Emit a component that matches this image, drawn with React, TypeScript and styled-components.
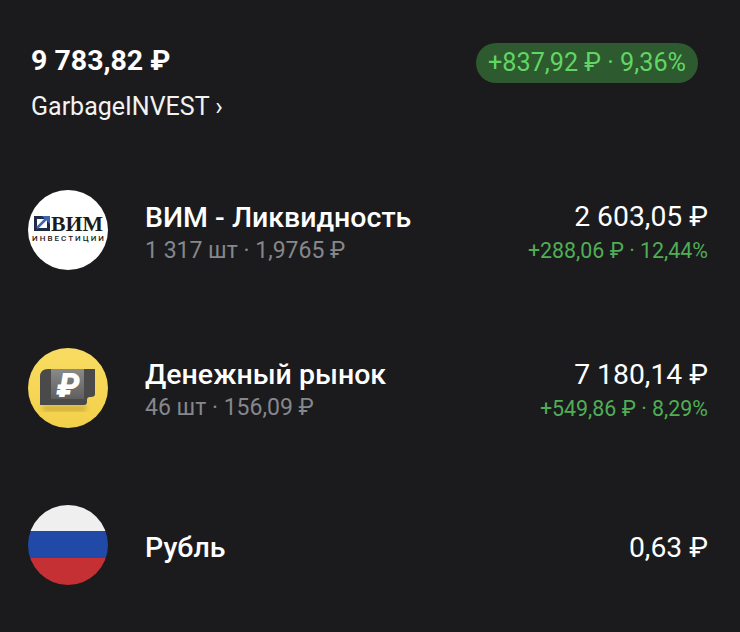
import styled, { createGlobalStyle } from "styled-components";

const GlobalStyle = createGlobalStyle`
  html, body {
    margin: 0;
    padding: 0;
    background: #1b1b1d;
  }
  body {
    font-family: Roboto, "Noto Sans", sans-serif;
    color: #fff;
  }
`;

const Page = styled.div`
  width: 740px;
  height: 632px;
  overflow: hidden;
  box-sizing: border-box;
  padding: 43px 32px 0 28px;
  background: #1b1b1d;
`;

const Header = styled.header`
  display: flex;
  justify-content: space-between;
  align-items: flex-start;
  padding-left: 3px;
  padding-right: 10px;
  margin-bottom: 68px;
`;

const Account = styled.div`
  display: flex;
  flex-direction: column;
  gap: 14px;
  padding-top: 1px;
`;

const Total = styled.div`
  font-size: 28.5px;
  line-height: 34px;
  font-weight: 700;
`;

const AccountLink = styled.div`
  font-size: 25px;
  line-height: 30px;
  color: #f2f2f2;
`;

const Pill = styled.div`
  height: 40px;
  padding: 0 12px;
  border-radius: 20px;
  background: #2d5a2e;
  color: #62d665;
  font-size: 25.2px;
  line-height: 40px;
`;

const List = styled.div`
  display: flex;
  flex-direction: column;
  gap: 77.5px;
`;

const Row = styled.div`
  display: flex;
  align-items: center;
  height: 80px;
`;

const Logo = styled.div`
  width: 80px;
  height: 80px;
  flex: none;
  margin-right: 37px;
  svg {
    display: block;
  }
`;

const Info = styled.div`
  flex: 1;
  display: flex;
  flex-direction: column;
  gap: 3px;
  padding-top: 6px;
`;

const Name = styled.div`
  font-size: 28.5px;
  line-height: 32px;
  font-weight: 500;
`;

const Sub = styled.div`
  font-size: 23px;
  line-height: 28px;
  color: #85878c;
`;

const Values = styled.div`
  display: flex;
  flex-direction: column;
  align-items: flex-end;
  gap: 4px;
  padding-top: 6px;
`;

const Amount = styled.div`
  font-size: 28.3px;
  line-height: 32px;
`;

const Change = styled.div`
  font-size: 21.4px;
  line-height: 28px;
  color: #4fae55;
`;

function VimLogo() {
  return (
    <svg width="80" height="80" viewBox="0 0 80 80">
      <circle cx="40" cy="40" r="40" fill="#fff" />
      <rect x="6" y="26" width="16" height="15" fill="#1f2a44" />
      <rect x="9" y="29" width="10" height="9" fill="#fff" />
      <path d="M9 38 L19 28" stroke="#3f66b5" strokeWidth="2.5" />
      <path d="M14 26 H22 V34 Z" fill="#3f66b5" />
      <text x="23" y="41" fontFamily="'Liberation Serif', serif" fontSize="21" fontWeight="700" fill="#1b1b1b" textLength="52" lengthAdjust="spacingAndGlyphs">
        ВИМ
      </text>
      <text x="4" y="51" fontFamily="Roboto, sans-serif" fontSize="8" fontWeight="500" fill="#222" textLength="72" lengthAdjust="spacing">
        ИНВЕСТИЦИИ
      </text>
    </svg>
  );
}

function MoneyLogo() {
  return (
    <svg width="80" height="80" viewBox="0 0 80 80">
      <defs>
        <linearGradient id="sun" x1="0" y1="0" x2="0" y2="1">
          <stop offset="0" stopColor="#f8dc62" />
          <stop offset="1" stopColor="#f3d04a" />
        </linearGradient>
        <linearGradient id="panel" x1="0" y1="0" x2="0" y2="1">
          <stop offset="0" stopColor="#8a8a8a" />
          <stop offset="1" stopColor="#5f5f5f" />
        </linearGradient>
        <filter id="soft" x="-20%" y="-20%" width="140%" height="140%">
          <feGaussianBlur stdDeviation="2.5" />
        </filter>
      </defs>
      <circle cx="40" cy="40" r="40" fill="url(#sun)" />
      <path d="M13 58 H58 V63 H16 Z" fill="#b8982f" opacity="0.7" filter="url(#soft)" />
      <path d="M20 21 H67 V46 Q67 49 63 49 H62 Q59 49 59 52 V54 Q59 57 56 57 H12 V29 Q12 21 20 21 Z" fill="#4a4a4a" />
      <rect x="23" y="21" width="33" height="30" fill="url(#panel)" />
      <text x="40" y="49" textAnchor="middle" fontFamily="Roboto, sans-serif" fontSize="33" fontWeight="900" fontStyle="italic" fill="#fff">
        ₽
      </text>
    </svg>
  );
}

function FlagLogo() {
  return (
    <svg width="80" height="80" viewBox="0 0 80 80">
      <clipPath id="flag">
        <circle cx="40" cy="40" r="40" />
      </clipPath>
      <g clipPath="url(#flag)">
        <rect width="80" height="26" fill="#efefef" />
        <rect y="26" width="80" height="27" fill="#2049a8" />
        <rect y="53" width="80" height="27" fill="#c53034" />
      </g>
    </svg>
  );
}

export default function App() {
  return (
    <Page>
      <GlobalStyle />
      <Header>
        <Account>
          <Total>9 783,82 ₽</Total>
          <AccountLink>GarbageINVEST ›</AccountLink>
        </Account>
        <Pill>+837,92 ₽ · 9,36%</Pill>
      </Header>
      <List>
        <Row>
          <Logo>
            <VimLogo />
          </Logo>
          <Info>
            <Name>ВИМ - Ликвидность</Name>
            <Sub>1 317 шт · 1,9765 ₽</Sub>
          </Info>
          <Values>
            <Amount>2 603,05 ₽</Amount>
            <Change>+288,06 ₽ · 12,44%</Change>
          </Values>
        </Row>
        <Row>
          <Logo>
            <MoneyLogo />
          </Logo>
          <Info>
            <Name>Денежный рынок</Name>
            <Sub>46 шт · 156,09 ₽</Sub>
          </Info>
          <Values>
            <Amount>7 180,14 ₽</Amount>
            <Change>+549,86 ₽ · 8,29%</Change>
          </Values>
        </Row>
        <Row>
          <Logo>
            <FlagLogo />
          </Logo>
          <Info>
            <Name>Рубль</Name>
          </Info>
          <Values>
            <Amount>0,63 ₽</Amount>
          </Values>
        </Row>
      </List>
    </Page>
  );
}
